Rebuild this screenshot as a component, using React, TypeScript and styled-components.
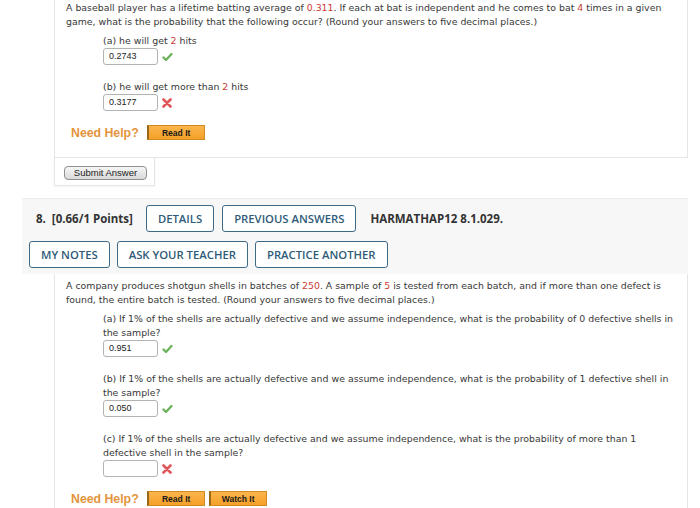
import styled, { createGlobalStyle } from 'styled-components'

const GlobalStyle = createGlobalStyle`
  body {
    margin: 0;
    background: #fff;
    font-family: Verdana, "DejaVu Sans", sans-serif;
  }
`

function Check() {
  return (
    <svg width="11" height="10" viewBox="0 0 11 10">
      <path d="M1.5 5.5 L4 8 L9.5 2" fill="none" stroke="#6bb25a" strokeWidth="2.3" strokeLinecap="round" strokeLinejoin="round" />
    </svg>
  )
}

function Cross() {
  return (
    <svg width="10" height="10" viewBox="0 0 10 10">
      <path d="M1.5 1.5 L8.5 8.5 M8.5 1.5 L1.5 8.5" fill="none" stroke="#e0565b" strokeWidth="2.6" strokeLinecap="round" />
    </svg>
  )
}

type Part = { label: React.ReactNode; value: string; ok: boolean }

function Answer({ label, value, ok }: Part) {
  return (
    <PartBlock>
      <PartLabel>{label}</PartLabel>
      <AnswerRow>
        <AnswerBox>{value}</AnswerBox>
        {ok ? <Check /> : <Cross />}
      </AnswerRow>
    </PartBlock>
  )
}

export default function App() {
  return (
    <Page>
      <GlobalStyle />
      <QuestionCard>
        <Prompt>
          A baseball player has a lifetime batting average of <Red>0.311</Red>. If each at bat is independent and he comes to bat <Red>4</Red> times in a given
          game, what is the probability that the following occur? (Round your answers to five decimal places.)
        </Prompt>
        <Answer label={<>(a) he will get <Red>2</Red> hits</>} value="0.2743" ok />
        <Answer label={<>(b) he will get more than <Red>2</Red> hits</>} value="0.3177" ok={false} />
        <HelpRow>
          <NeedHelp>Need Help?</NeedHelp>
          <HelpButton>Read It</HelpButton>
        </HelpRow>
      </QuestionCard>
      <SubmitBar>
        <SubmitButton>Submit Answer</SubmitButton>
      </SubmitBar>

      <QHeader>
        <HeaderRow>
          <QTitle>8.&nbsp; [0.66/1 Points]</QTitle>
          <OutlineBtn>DETAILS</OutlineBtn>
          <OutlineBtn>PREVIOUS ANSWERS</OutlineBtn>
          <QCode>HARMATHAP12 8.1.029.</QCode>
        </HeaderRow>
        <HeaderRow $first>
          <OutlineBtn>MY NOTES</OutlineBtn>
          <OutlineBtn>ASK YOUR TEACHER</OutlineBtn>
          <OutlineBtn>PRACTICE ANOTHER</OutlineBtn>
        </HeaderRow>
      </QHeader>

      <QuestionCard $open>
        <Prompt>
          A company produces shotgun shells in batches of <Red>250</Red>. A sample of <Red>5</Red> is tested from each batch, and if more than one defect is
          found, the entire batch is tested. (Round your answers to five decimal places.)
        </Prompt>
        <Answer label="(a) If 1% of the shells are actually defective and we assume independence, what is the probability of 0 defective shells in the sample?" value="0.951" ok />
        <Answer label="(b) If 1% of the shells are actually defective and we assume independence, what is the probability of 1 defective shell in the sample?" value="0.050" ok />
        <Answer label="(c) If 1% of the shells are actually defective and we assume independence, what is the probability of more than 1 defective shell in the sample?" value="" ok={false} />
        <HelpRow>
          <NeedHelp>Need Help?</NeedHelp>
          <HelpButton>Read It</HelpButton>
          <HelpButton>Watch It</HelpButton>
        </HelpRow>
      </QuestionCard>
    </Page>
  )
}

const Page = styled.div`
  width: 666px;
  padding-left: 22px;
`
const QuestionCard = styled.section<{ $open?: boolean }>`
  margin-left: 32px;
  padding: ${(p) => (p.$open ? '5px' : '1px')} 12px ${(p) => (p.$open ? '20px' : '17px')} 11px;
  border-left: 1px solid #e6e6e6;
  border-right: 1px solid #e6e6e6;
  border-bottom: ${(p) => (p.$open ? 'none' : '1px solid #e6e6e6')};
  color: #383838;
  font-size: 9.4px;
  line-height: 14px;
`
const Prompt = styled.p`
  margin: 0 0 5px;
`
const Red = styled.span`
  color: #cc3a35;
`
const PartBlock = styled.div`
  margin: 0 0 15px 37px;
`
const PartLabel = styled.div``
const AnswerRow = styled.div`
  display: flex;
  align-items: center;
  gap: 4px;
`
const AnswerBox = styled.div`
  box-sizing: border-box;
  width: 55px;
  height: 17px;
  padding: 0 5px;
  border: 1px solid #b3b3b3;
  border-radius: 3px;
  font-family: "Liberation Sans", Arial, sans-serif;
  font-size: 9px;
  line-height: 15px;
  color: #222;
`
const HelpRow = styled.div`
  display: flex;
  align-items: center;
  gap: 4px;
  margin: -1px 0 0 5px;
`
const NeedHelp = styled.span`
  font-family: "Liberation Sans", Arial, sans-serif;
  font-weight: bold;
  font-size: 12.3px;
  color: #e3943d;
  margin-right: 4px;
`
const HelpButton = styled.span`
  box-sizing: border-box;
  width: 58px;
  height: 15px;
  display: flex;
  align-items: center;
  justify-content: center;
  background: linear-gradient(#fbb54c, #f5a028);
  border: 1px solid #d08a22;
  border-left: 2px solid #9a6818;
  font-family: "Liberation Sans", Arial, sans-serif;
  font-weight: bold;
  font-size: 8.5px;
  color: #1a1a1a;
`
const SubmitBar = styled.div`
  box-sizing: border-box;
  margin-left: 32px;
  width: 101px;
  height: 28px;
  padding: 8px 0 0 9px;
  border: 1px solid #e6e6e6;
  border-top: none;
  box-shadow: 0 1px 2px rgba(0, 0, 0, 0.05);
`
const SubmitButton = styled.div`
  box-sizing: border-box;
  width: 83px;
  height: 14px;
  border: 1px solid #8f8f8f;
  border-radius: 4px;
  background: linear-gradient(#f6f6f6, #d9d9d9);
  font-family: "Liberation Sans", Arial, sans-serif;
  font-size: 9.5px;
  line-height: 12px;
  text-align: center;
  color: #222;
`
const QHeader = styled.div`
  margin-top: 12px;
  padding: 6px 7px 6px;
  background: #f7f7f7;
  border-top: 1px solid #ececec;
  display: flex;
  flex-direction: column;
  gap: 9px;
  font-family: "Open Sans", sans-serif;
`
const HeaderRow = styled.div<{ $first?: boolean }>`
  display: flex;
  align-items: center;
  gap: ${(p) => (p.$first ? '7px' : '8px')};
`
const QTitle = styled.span`
  font-weight: 700;
  font-size: 11.5px;
  color: #333;
  margin: 0 5px 0 7px;
`
const OutlineBtn = styled.span`
  box-sizing: border-box;
  height: 27px;
  padding: 0 11px;
  display: flex;
  align-items: center;
  border: 1.5px solid #3e6a88;
  border-radius: 3px;
  background: #fff;
  font-weight: 600;
  font-size: 11.3px;
  color: #2f5b78;
`
const QCode = styled.span`
  font-weight: 700;
  font-size: 11.5px;
  color: #333;
  margin-left: 6px;
`
